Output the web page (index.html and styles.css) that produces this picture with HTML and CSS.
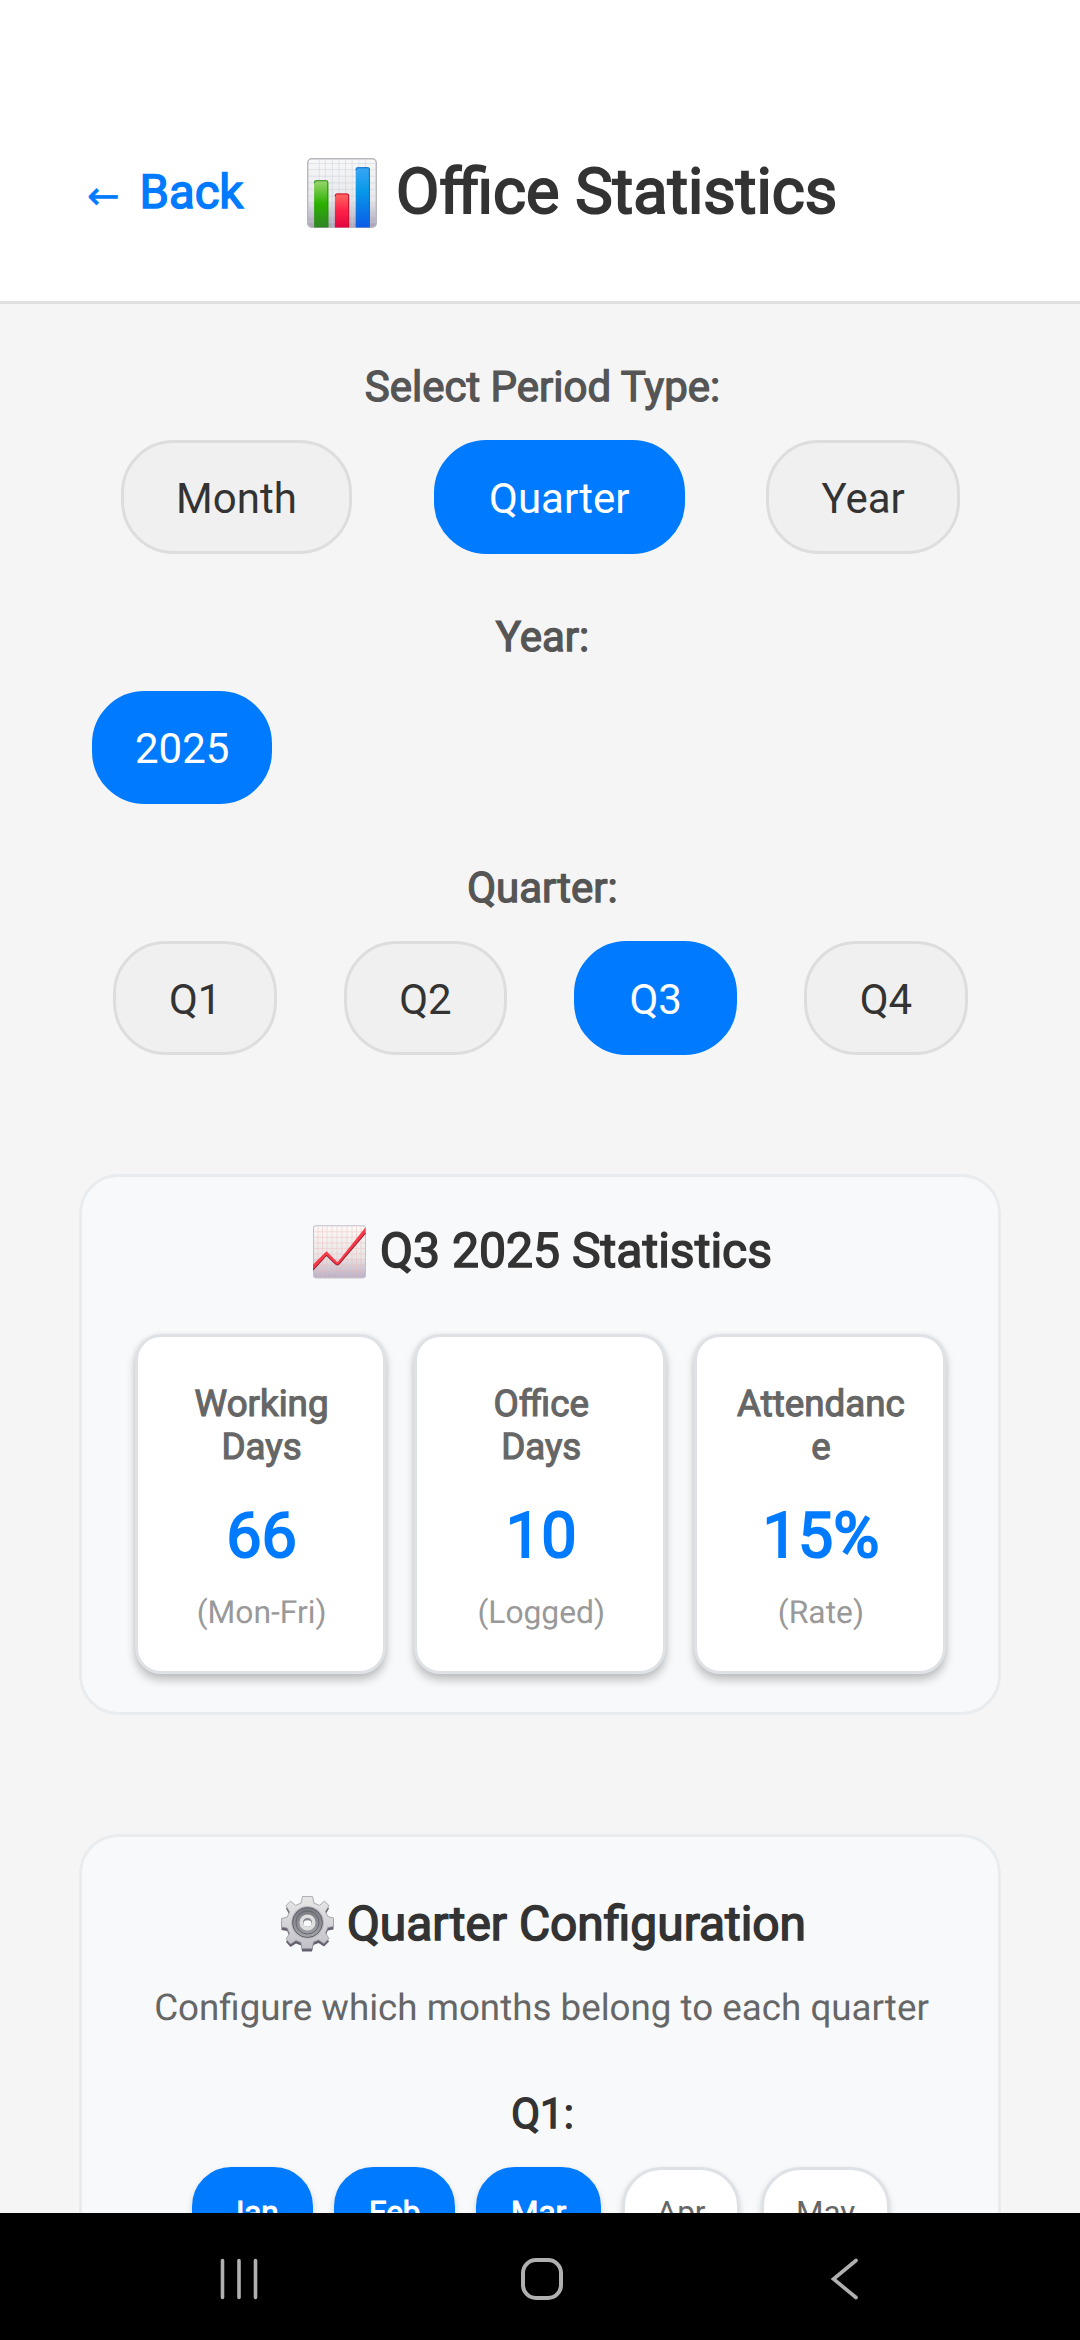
FILE: index.html
```html
<!DOCTYPE html>
<html lang="en">
<head>
<meta charset="utf-8">
<title>Office Statistics</title>
<link rel="stylesheet" href="styles.css">
</head>
<body>
<div class="app">
  <header class="header">
    <a class="back"><span class="back-arrow">←</span> <span>Back</span></a>
    <h1 class="title">
      <svg class="title-icon" viewBox="0 0 69 69">
        <defs>
          <linearGradient id="paper" x1="0" y1="0" x2="0" y2="1"><stop offset="0" stop-color="#f8f8f8"/><stop offset=".6" stop-color="#e8e8ec"/><stop offset="1" stop-color="#a9a1b5"/></linearGradient>
          <linearGradient id="green" x1="0" y1="0" x2="0" y2="1"><stop offset="0" stop-color="#9bd770"/><stop offset=".5" stop-color="#2bb000"/><stop offset="1" stop-color="#2f8428"/></linearGradient>
          <linearGradient id="red" x1="0" y1="0" x2="0" y2="1"><stop offset="0" stop-color="#ff6a62"/><stop offset=".5" stop-color="#ff2248"/><stop offset="1" stop-color="#e0053f"/></linearGradient>
          <linearGradient id="blue" x1="0" y1="0" x2="0" y2="1"><stop offset="0" stop-color="#3ba6f5"/><stop offset=".4" stop-color="#0898e8"/><stop offset="1" stop-color="#0a5be6"/></linearGradient>
        </defs>
        <rect x=".7" y=".7" width="67.6" height="67.6" rx="4" fill="url(#paper)" stroke="#b9b7be" stroke-width="1.4"/>
        <path d="M12 1V68M18 1V68M25 1V68M31.500 1V68M38 1V68M44.500 1V68M51 1V68M57.500 1V68M1 5.500H68M1 11.500H68M1 18H68M1 24.500H68M1 31H68M1 37.500H68M1 44H68M1 50.500H68M1 57H68M1 63H68" stroke="#c9d2de" stroke-width=".8" opacity=".65"/>
        <path d="M7 68.500V24q0-2 2-2H19q2 0 2 2V68.500Z" fill="url(#green)"/>
        <path d="M27.500 68.500V37q0-2 2-2h10q2 0 2 2V68.500Z" fill="url(#red)"/>
        <path d="M48 68.500V11q0-2 2-2h10q2 0 2 2V68.500Z" fill="url(#blue)"/>
        <path d="M7.500 25V23.500Q7.500 22.500 9 22.500H19Q20.500 22.500 20.500 24V68" fill="none" stroke="#2f8b20" stroke-width="1"/>
        <path d="M28 38V37Q28 35.500 29.500 35.500H39.500Q41 35.500 41 37V68" fill="none" stroke="#c8102e" stroke-width="1"/>
        <path d="M48.500 12V11Q48.500 9.500 50 9.500H60Q61.500 9.500 61.500 11V68" fill="none" stroke="#0f6fc4" stroke-width="1"/>
      </svg>
      <span>Office Statistics</span>
    </h1>
  </header>

  <main class="content">
    <section class="group">
      <h2 class="label">Select Period Type:</h2>
      <div class="pills">
        <button class="pill">Month</button>
        <button class="pill active">Quarter</button>
        <button class="pill">Year</button>
      </div>
    </section>
    <section class="group">
      <h2 class="label">Year:</h2>
      <div class="pills years">
        <button class="pill year active">2025</button>
      </div>
    </section>
    <section class="group">
      <h2 class="label">Quarter:</h2>
      <div class="pills">
        <button class="pill">Q1</button>
        <button class="pill">Q2</button>
        <button class="pill active">Q3</button>
        <button class="pill">Q4</button>
      </div>
    </section>

    <section class="card stats">
      <h2 class="card-title">
        <svg class="card-icon" viewBox="0 0 53 56">
          <defs>
            <linearGradient id="sheet" x1="0" y1="0" x2="0" y2="1"><stop offset="0" stop-color="#fbfaf8"/><stop offset=".6" stop-color="#e9e5e6"/><stop offset="1" stop-color="#b9b0c6"/></linearGradient>
          </defs>
          <g transform="translate(0 -2.300) scale(1 1.110)">
            <rect x=".5" y="4.500" width="52" height="47" rx="2.500" fill="url(#sheet)" stroke="#c3bfc8"/>
            <path d="M5 5V51M9.500 5V51M14 5V51M19 5V51M24 5V51M29 5V51M34 5V51M39 5V51M43.500 5V51M48 5V51M1 10H52M1 15H52M1 20H52M1 25H52M1 30H52M1 35H52M1 40H52M1 45H52" stroke="#eeb9b4" stroke-width=".7" opacity=".6"/>
            <path d="M0 39.500 13.500 27.500 24.500 37.500 52.500 6V11L26.500 38.500Q24.500 41 22 38.500L13.500 31 0 44.500Z" fill="#f93a48"/>
            <path d="M0 44.500 13.500 31.300 22 38.700Q24.500 41 26.500 38.700L52.500 11.200" fill="none" stroke="#9c1a2c" stroke-width="1"/>
          </g>
        </svg>
        <span>Q3 2025 Statistics</span>
      </h2>
      <div class="stat-row">
        <div class="stat">
          <div class="stat-label">Working Days</div>
          <div class="stat-value">66</div>
          <div class="stat-note">(Mon-Fri)</div>
        </div>
        <div class="stat">
          <div class="stat-label">Office Days</div>
          <div class="stat-value">10</div>
          <div class="stat-note">(Logged)</div>
        </div>
        <div class="stat">
          <div class="stat-label">Attendance</div>
          <div class="stat-value">15%</div>
          <div class="stat-note">(Rate)</div>
        </div>
      </div>
    </section>

    <section class="card config">
      <h2 class="card-title">
        <svg class="card-icon" viewBox="0 0 53 56">
          <defs>
            <linearGradient id="metal" x1="0" y1="0" x2="0" y2="1"><stop offset="0" stop-color="#e8e8e8"/><stop offset="1" stop-color="#c2c1c9"/></linearGradient>
            <linearGradient id="ring" x1="0" y1="0" x2="0" y2="1"><stop offset="0" stop-color="#77797f"/><stop offset="1" stop-color="#a3a3aa"/></linearGradient>
            <path id="cog" d="M21.500 1h10l1.500 6.500 5.500 2.300 5-4.300 4.500 4.500-3.500 6 2.300 5 5.700 1.300v8.500l-5.700 1.200-2.300 5.500 3.500 5.500-5 5-5.500-3.700-5 2.200-1.500 6.500h-10L20 47l-5-2.200-5.500 3.700-4.500-5L8.500 38l-2.300-5.500-5.700-1.200v-8.500l5.700-1.300 2.300-5L5 10l4.500-4.500 5 4.300 5.500-2.300z"/>
          </defs>
          <use href="#cog" fill="#65606f" transform="translate(0 2.600)"/>
          <use href="#cog" fill="url(#metal)" stroke="#9b9aa0" stroke-width=".8" transform="translate(0 -.4)"/>
          <circle cx="26.500" cy="26.500" r="16.500" fill="#bdbcc3"/>
          <circle cx="26.500" cy="26.500" r="15" fill="url(#ring)" stroke="#606168" stroke-width="1"/>
          <circle cx="26.500" cy="26.500" r="11.500" fill="none" stroke="#64656d" stroke-width="1"/>
          <circle cx="26.500" cy="26.500" r="6.300" fill="#85858d" stroke="#dededf" stroke-width="3.500"/>
          <ellipse cx="26.500" cy="27.500" rx="4" ry="3.200" fill="#f8f9fa"/>
        </svg>
        <span>Quarter Configuration</span>
      </h2>
      <p class="description">Configure which months belong to each quarter</p>
      <h3 class="quarter-label">Q1:</h3>
      <div class="chips">
        <button class="chip active">Jan</button>
        <button class="chip active">Feb</button>
        <button class="chip active">Mar</button>
        <button class="chip">Apr</button>
        <button class="chip">May</button>
      </div>
    </section>
  </main>

  <nav class="navbar">
    <svg class="nav-icon" viewBox="0 0 48 48"><path d="M7.500 5.500V42.500M24 5.500V42.500M40.500 5.500V42.500" fill="none" stroke="#b0b0b0" stroke-width="3.600" stroke-linecap="round"/></svg>
    <svg class="nav-icon" viewBox="0 0 48 48"><rect x="5" y="5" width="38" height="38" rx="13" fill="none" stroke="#b0b0b0" stroke-width="4"/></svg>
    <svg class="nav-icon" viewBox="0 0 48 48"><path d="M35 5.500 12.500 24 35 42.500" fill="none" stroke="#b0b0b0" stroke-width="3.600" stroke-linecap="round"/></svg>
  </nav>
</div>
</body>
</html>
```
FILE: styles.css
```css
* { box-sizing: border-box; }

body {
  margin: 0;
  background: #f5f5f5;
  color: #333;
  font-family: Roboto, sans-serif;
  text-rendering: geometricPrecision;
}

h1, h2, h3, p { margin: 0; font-weight: 400; }

button {
  font: inherit;
  margin: 0;
}

.app {
  display: flex;
  flex-direction: column;
  width: 1080px;
  height: 2340px;
  overflow: hidden;
}

/* Header */
.header {
  display: flex;
  align-items: center;
  flex: none;
  height: 304px;
  padding: 84px 79px 0 87px;
  background: #fff;
  border-bottom: 3px solid #e0e0e0;
}

.back {
  display: flex;
  align-items: flex-start;
  width: 220px;
  padding-top: 3px;
  color: #007bff;
  font-size: 47.25px;
  line-height: 56px;
  -webkit-text-stroke: 0.031em;
}

.back-arrow {
  width: 52.5px;
  padding-top: 5px;
  font-family: "DejaVu Sans", sans-serif;
  font-size: 39px;
  -webkit-text-stroke: 0.5px;
}

.title {
  display: flex;
  align-items: center;
  gap: 19px;
  font-size: 63px;
  line-height: 74px;
  white-space: nowrap;
  -webkit-text-stroke: 0.031em;
}

.title-icon { width: 70px; height: 70px; }

/* Period selectors */
.content {
  flex: 1;
  min-height: 0;
  overflow: hidden;
  padding: 59px 79px 0;
}

.group { margin-bottom: 59.5px; }

.label {
  height: 50px;
  margin-bottom: 27.2px;
  padding-left: 5px;
  color: #555;
  font-size: 42px;
  line-height: 50px;
  text-align: center;
  -webkit-text-stroke: 0.031em;
}

.pills {
  display: flex;
  justify-content: space-around;
  padding-left: 1px;
}

.pills.years {
  justify-content: flex-start;
  padding-left: 13px;
}

.pill {
  height: 113.8px;
  padding: 3px 52.5px 0;
  border: 3px solid #ddd;
  border-radius: 52.5px;
  background: #f0f0f0;
  color: #333;
  font-size: 42px;
  line-height: 50px;
}

.pill.year { padding: 3px 40px 0; }

.pill.active {
  border-color: #007bff;
  background: #007bff;
  color: #fff;
}

/* Cards */
.card {
  border: 3px solid #e9ecef;
  border-radius: 39.4px;
  background: #f8f9fb;
}

.card-title {
  display: flex;
  justify-content: center;
  align-items: center;
  gap: 14px;
  height: 56px;
  padding-left: 5px;
  font-size: 48.1px;
  line-height: 56px;
  -webkit-text-stroke: 0.031em;
}

.card-icon { width: 53px; height: 56px; }

.stats {
  height: 540.5px;
  margin-top: 119.3px;
  padding: 45.3px 52.5px 0;
}

.stat-row {
  display: grid;
  grid-template-columns: repeat(3, 1fr);
  gap: 28px;
  margin-top: 55.5px;
}

.stat {
  height: 340px;
  padding: 44.6px 33.5px 0 36px;
  border: 3px solid #dee2e6;
  border-radius: 26px;
  background: #fff;
  box-shadow: 0 6px 10px rgba(0, 0, 0, 0.23), 0 0 5px rgba(0, 0, 0, 0.06);
  text-align: center;
}

.stat-label {
  color: #666;
  font-size: 36.75px;
  line-height: 43.3px;
  overflow-wrap: anywhere;
  -webkit-text-stroke: 0.031em;
}

.stat-value {
  margin-top: 31.7px;
  color: #007bff;
  font-size: 63px;
  line-height: 74px;
  -webkit-text-stroke: 0.031em;
}

.stat-note {
  margin-top: 19.8px;
  color: #999;
  font-size: 31.8px;
  line-height: 37px;
}

.config {
  height: 900px;
  margin-top: 119.4px;
  padding: 58.6px 52.5px 0;
}

.config .card-title {
  gap: 13px;
  padding-left: 7px;
  font-size: 47.9px;
}

.description {
  margin-top: 34.3px;
  padding-left: 3px;
  color: #666;
  font-size: 36.75px;
  line-height: 43px;
  text-align: center;
}

.quarter-label {
  margin-top: 60.7px;
  padding-left: 5px;
  font-size: 42px;
  line-height: 50px;
  text-align: center;
  -webkit-text-stroke: 0.031em;
}

.chips {
  display: flex;
  justify-content: center;
  gap: 21px;
  margin-top: 27.1px;
  padding-left: 2px;
}

.chip {
  height: 92px;
  padding: 0 31.7px;
  border: 3px solid #dee2e6;
  border-radius: 39.4px;
  background: #fff;
  box-shadow: 0 3px 6px rgba(0, 0, 0, 0.16);
  color: #666;
  font-size: 31.5px;
  line-height: 37px;
}

.chip.active {
  border-color: #007bff;
  background: #007bff;
  color: #fff;
  -webkit-text-stroke: 0.031em;
}

/* System navigation */
.navbar {
  display: flex;
  justify-content: space-between;
  align-items: center;
  flex: none;
  height: 127px;
  padding: 5px 211px 0 215px;
  background: #000;
}

.nav-icon { width: 48px; height: 48px; }
```
